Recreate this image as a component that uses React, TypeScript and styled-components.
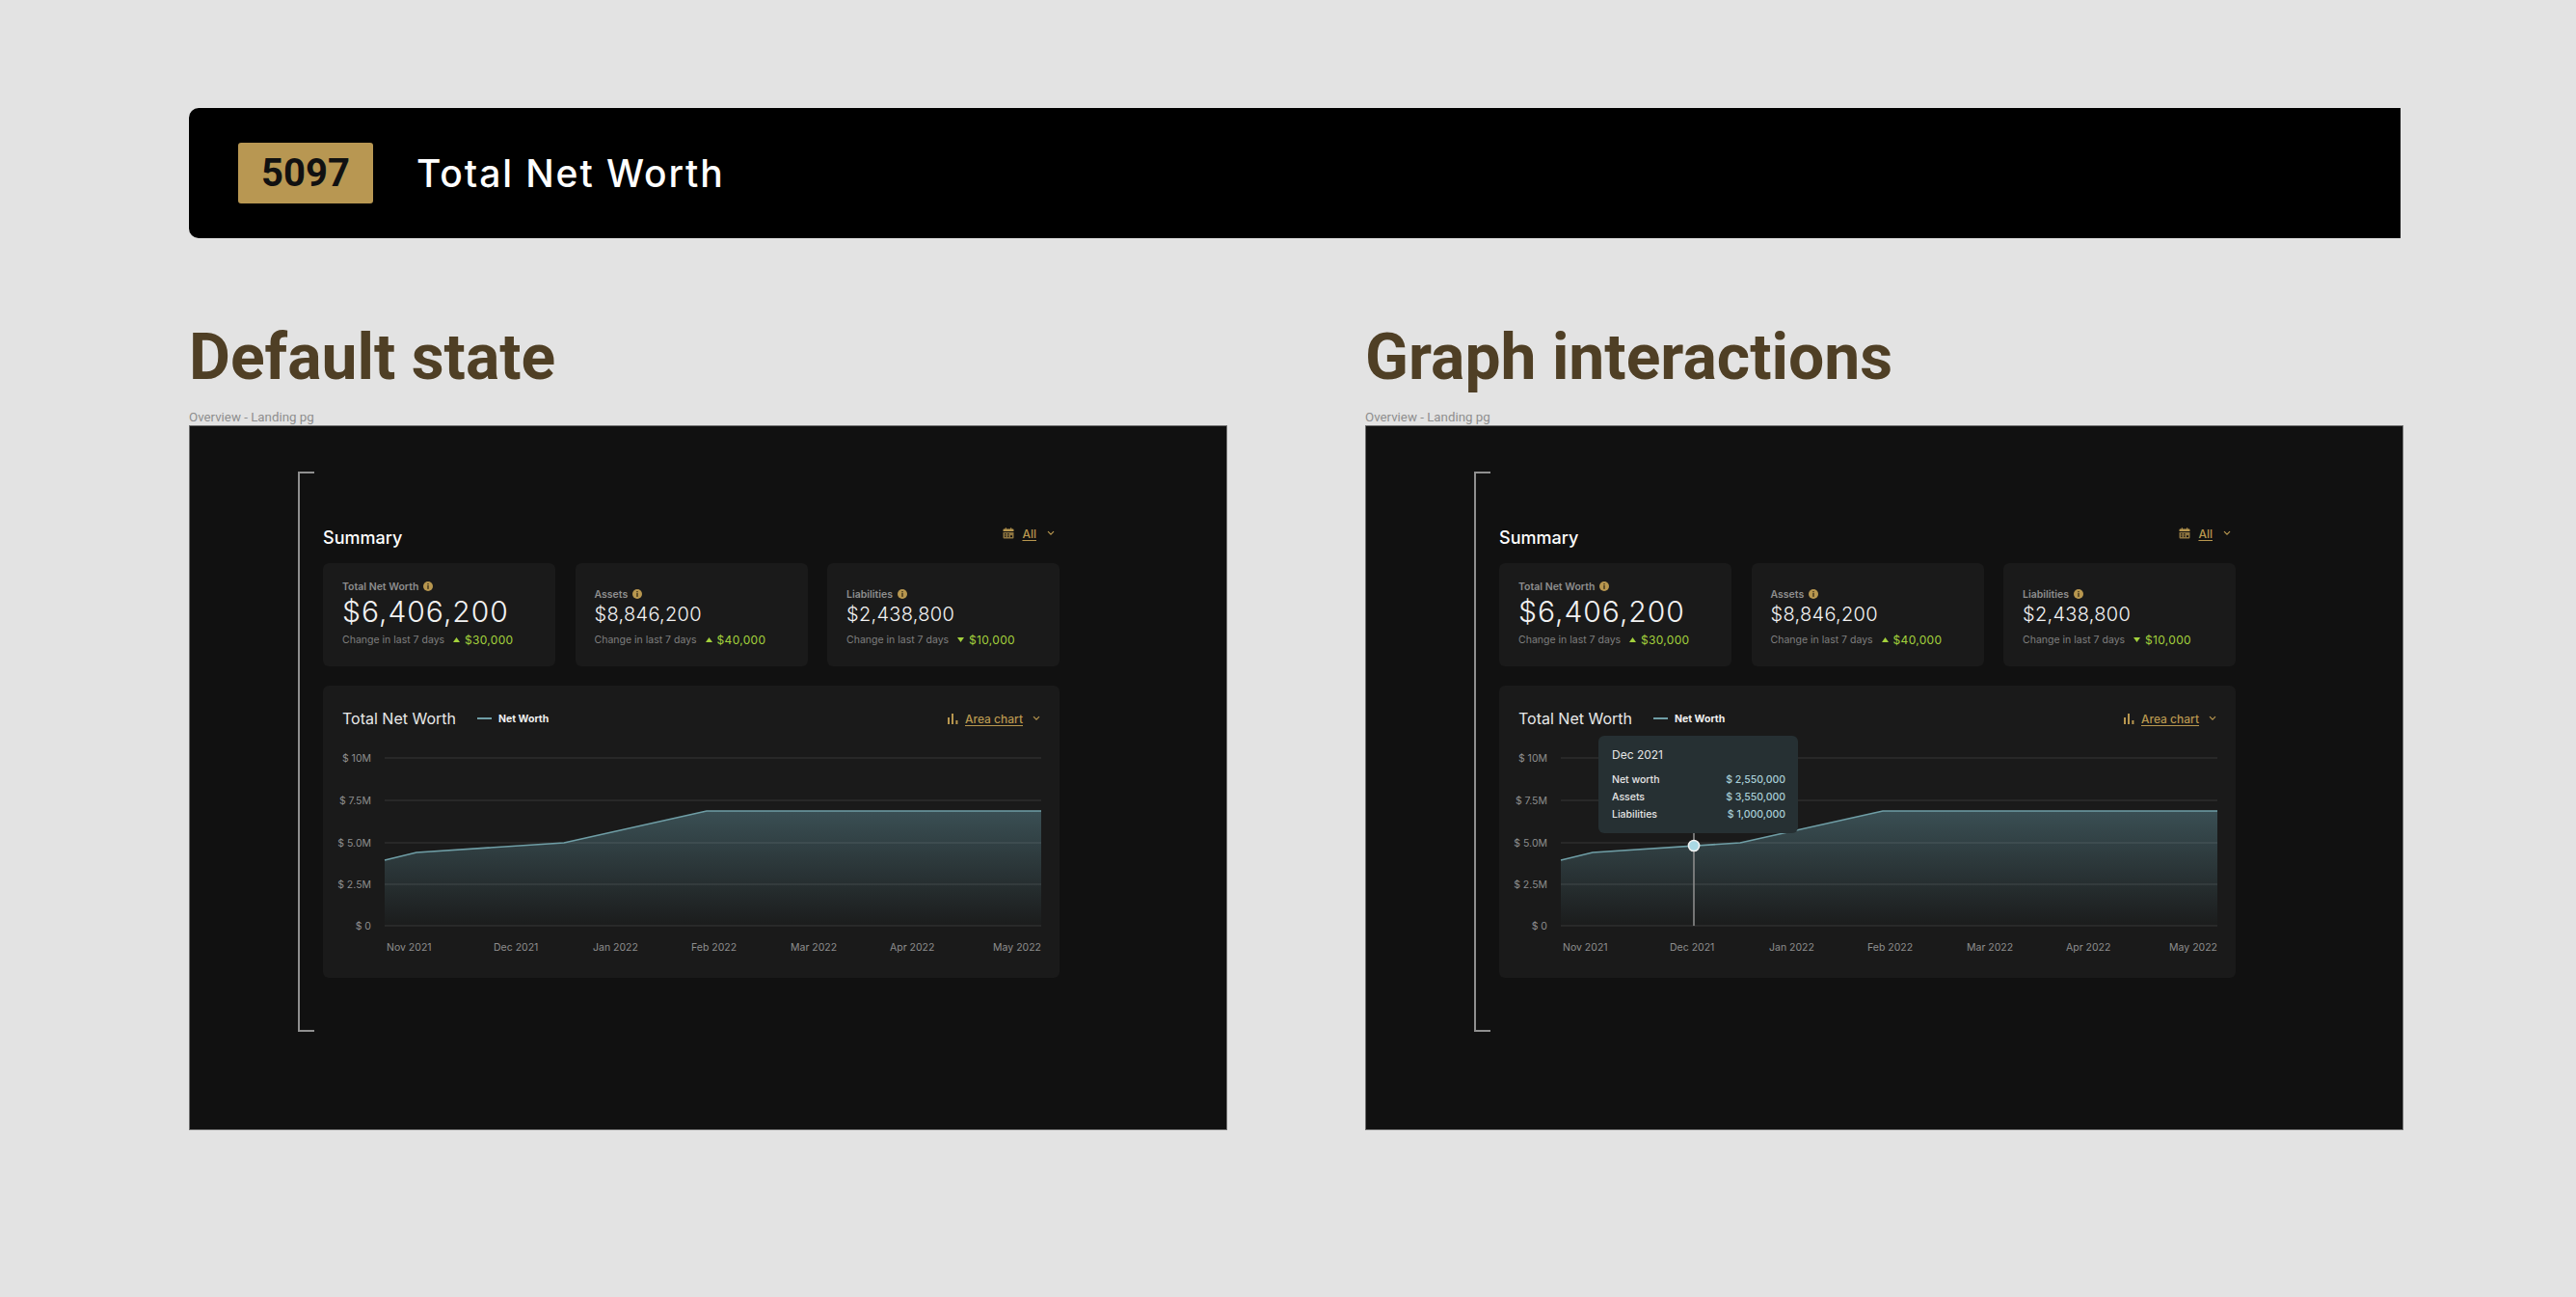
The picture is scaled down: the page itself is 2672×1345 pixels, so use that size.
import styled, { createGlobalStyle } from 'styled-components';

type Stat = {
  label: string;
  value: string;
  change: string;
  direction: 'up' | 'down';
  featured?: boolean;
};

const STATS: Stat[] = [
  { label: 'Total Net Worth', value: '$6,406,200', change: '$30,000', direction: 'up', featured: true },
  { label: 'Assets', value: '$8,846,200', change: '$40,000', direction: 'up' },
  { label: 'Liabilities', value: '$2,438,800', change: '$10,000', direction: 'down' },
];

const Y_AXIS = [
  { label: '$ 10M', y: 15 },
  { label: '$ 7.5M', y: 59 },
  { label: '$ 5.0M', y: 103 },
  { label: '$ 2.5M', y: 146 },
  { label: '$ 0', y: 189 },
];

const X_AXIS = [
  { label: 'Nov 2021', x: 46 },
  { label: 'Dec 2021', x: 157 },
  { label: 'Jan 2022', x: 260 },
  { label: 'Feb 2022', x: 362 },
  { label: 'Mar 2022', x: 465 },
  { label: 'Apr 2022', x: 568 },
];

const TOOLTIP_ROWS = [
  { label: 'Net worth', value: '$ 2,550,000' },
  { label: 'Assets', value: '$ 3,550,000' },
  { label: 'Liabilities', value: '$ 1,000,000' },
];

const LINE = '44,121 77,113 230,103 378,70 725,70';
const AREA = `44,189 ${LINE} 725,189`;

const Chevron = () => (
  <svg width="8" height="6" viewBox="0 0 8 6" fill="none">
    <path d="M1 1.2 4 4.2 7 1.2" stroke="#b8974f" strokeWidth="1.2" />
  </svg>
);

const CalendarIcon = () => (
  <svg width="12" height="12" viewBox="0 0 12 12">
    <path d="M0.5 2.5a1 1 0 0 1 1-1h9a1 1 0 0 1 1 1v1.5h-11z" fill="#b8974f" />
    <path d="M2.8 0.3h1v2h-1zM8.2 0.3h1v2h-1z" fill="#b8974f" />
    <path
      d="M0.5 5h11v5.5a1 1 0 0 1-1 1h-9a1 1 0 0 1-1-1zM2 6.2v1.2h1.6V6.2zM5 6.2v1.2h1.6V6.2zM2 8.6v1.2h1.6V8.6zM5 8.6v1.2h1.6V8.6zM8 8.2v1.8h2V8.2z"
      fill="#8f7640"
      fillRule="evenodd"
    />
  </svg>
);

const BarsIcon = () => (
  <svg width="11" height="11" viewBox="0 0 11 11" fill="#b8974f">
    <rect x="0" y="4" width="2" height="7" />
    <rect x="4" y="0" width="2" height="11" />
    <rect x="8.4" y="7" width="2" height="4" />
  </svg>
);

const InfoIcon = () => (
  <svg width="10" height="10" viewBox="0 0 10 10">
    <circle cx="5" cy="5" r="5" fill="#b8974f" />
    <rect x="4.4" y="2" width="1.2" height="1.2" fill="#2a2212" />
    <rect x="4.4" y="3.9" width="1.2" height="4" fill="#2a2212" />
  </svg>
);

const Trend = ({ direction }: { direction: 'up' | 'down' }) => (
  <svg width="7" height="5" viewBox="0 0 7 5" fill="#a3d13c">
    <path d={direction === 'up' ? 'M3.5 0 7 5H0z' : 'M0 0h7L3.5 5z'} />
  </svg>
);

function Chart({ interactive }: { interactive: boolean }) {
  const gradientId = interactive ? 'areaB' : 'areaA';

  return (
    <Plot width="725" height="225" viewBox="0 0 725 225">
      <defs>
        <linearGradient id={gradientId} x1="0" y1="0" x2="0" y2="1">
          <stop offset="0" stopColor="#3a4f54" />
          <stop offset="1" stopColor="#1b1c1c" />
        </linearGradient>
      </defs>
      <polygon points={AREA} fill={`url(#${gradientId})`} />
      {Y_AXIS.map(tick => (
        <g key={tick.label}>
          <line x1="44" x2="725" y1={tick.y} y2={tick.y} stroke="#ffffff" strokeOpacity="0.13" strokeWidth="1.2" />
          <AxisText x="30" y={tick.y + 4} textAnchor="end">
            {tick.label}
          </AxisText>
        </g>
      ))}
      <polyline points={LINE} fill="none" stroke="#6f9ea6" strokeWidth="1.6" />
      {X_AXIS.map(tick => (
        <AxisText key={tick.label} x={tick.x} y="215">
          {tick.label}
        </AxisText>
      ))}
      <AxisText x="725" y="215" textAnchor="end">
        May 2022
      </AxisText>
      {interactive && (
        <>
          <line x1="182" x2="182" y1="90" y2="189" stroke="#8b8b8b" strokeWidth="1.6" />
          <circle cx="182" cy="106" r="5.6" fill="#a9d8e4" stroke="#f4f4f4" strokeWidth="1.5" />
        </>
      )}
    </Plot>
  );
}

function Overview({ title, interactive = false }: { title: string; interactive?: boolean }) {
  return (
    <Section>
      <Heading>{title}</Heading>
      <Caption>Overview - Landing pg</Caption>
      <Panel>
        <Frame>
          <Bracket />
          <Content>
            <SummaryRow>
              <SummaryTitle>Summary</SummaryTitle>
              <Dropdown>
                <CalendarIcon />
                <DropdownLabel>All</DropdownLabel>
                <Chevron />
              </Dropdown>
            </SummaryRow>
            <Stats>
              {STATS.map(stat => (
                <StatCard key={stat.label} $featured={stat.featured}>
                  <StatLabel>
                    {stat.label}
                    <InfoIcon />
                  </StatLabel>
                  <StatValue $featured={stat.featured}>{stat.value}</StatValue>
                  <StatChange>
                    <span>Change in last 7 days</span>
                    <ChangeAmount>
                      <Trend direction={stat.direction} />
                      {stat.change}
                    </ChangeAmount>
                  </StatChange>
                </StatCard>
              ))}
            </Stats>
            <ChartCard>
              <ChartHeader>
                <ChartTitle>Total Net Worth</ChartTitle>
                <LegendLine />
                <LegendText>Net Worth</LegendText>
                <ChartType>
                  <BarsIcon />
                  <DropdownLabel>Area chart</DropdownLabel>
                  <Chevron />
                </ChartType>
              </ChartHeader>
              <Chart interactive={interactive} />
              {interactive && (
                <Tooltip>
                  <TooltipDate>Dec 2021</TooltipDate>
                  {TOOLTIP_ROWS.map(row => (
                    <TooltipRow key={row.label}>
                      <span>{row.label}</span>
                      <TooltipValue>{row.value}</TooltipValue>
                    </TooltipRow>
                  ))}
                </Tooltip>
              )}
            </ChartCard>
          </Content>
        </Frame>
      </Panel>
    </Section>
  );
}

export default function App() {
  return (
    <>
      <GlobalStyle />
      <Page>
        <Banner>
          <Badge>5097</Badge>
          <BannerTitle>Total Net Worth</BannerTitle>
        </Banner>
        <Sections>
          <Overview title="Default state" />
          <Overview title="Graph interactions" interactive />
        </Sections>
      </Page>
    </>
  );
}

const GlobalStyle = createGlobalStyle`
  html, body {
    margin: 0;
    height: 100%;
    overflow: hidden;
    background: #e3e3e3;
  }

  * {
    box-sizing: border-box;
  }
`;

const Page = styled.div`
  padding: 112px 0 0 196px;
  font-family: Inter, 'Liberation Sans', sans-serif;
`;

const Banner = styled.header`
  width: 2294px;
  height: 135px;
  display: flex;
  align-items: center;
  gap: 45px;
  padding-left: 51px;
  background: #000;
  border-radius: 10px 0 0 10px;
`;

const Badge = styled.div`
  width: 140px;
  height: 63px;
  display: flex;
  align-items: center;
  justify-content: center;
  background: #b89752;
  border-radius: 3px;
  color: #111;
  font-family: Roboto, sans-serif;
  font-size: 40px;
  font-weight: 700;
`;

const BannerTitle = styled.h1`
  margin: 0;
  color: #fff;
  font-size: 39px;
  font-weight: 500;
  letter-spacing: 1.9px;
`;

const Sections = styled.div`
  display: flex;
  gap: 143px;
  margin-top: 86px;
`;

const Section = styled.section`
  width: 1077px;
`;

const Heading = styled.h2`
  margin: 0 0 16px;
  color: #4f3f25;
  font-family: Roboto, sans-serif;
  font-size: 66px;
  font-weight: 700;
  line-height: 76px;
`;

const Caption = styled.div`
  height: 16px;
  color: #8e8e8e;
  font-family: Roboto, sans-serif;
  font-size: 13.3px;
  line-height: 15px;
`;

const Panel = styled.div`
  height: 731px;
  padding: 47px 0 0 112px;
  background: #111;
  border: 1px solid #6e6e6e;
`;

const Frame = styled.div`
  display: flex;
  height: 581px;
`;

const Bracket = styled.div`
  width: 17px;
  border: 2px solid #8f8f8f;
  border-right: none;
`;

const Content = styled.div`
  width: 764px;
  margin-left: 9px;
  padding-top: 52px;
`;

const SummaryRow = styled.div`
  height: 43px;
  display: flex;
  justify-content: space-between;
  padding-right: 5px;
`;

const SummaryTitle = styled.h3`
  margin: 0;
  color: #fff;
  font-size: 18px;
  font-weight: 500;
  line-height: 34px;
`;

const Dropdown = styled.div`
  display: flex;
  align-items: center;
  gap: 8px;
  height: 24px;
  color: #b8974f;
`;

const DropdownLabel = styled.span`
  margin-right: 3px;
  color: #b8974f;
  font-size: 12px;
  font-weight: 500;
  text-decoration: underline;
  text-underline-offset: 2px;
`;

const Stats = styled.div`
  display: grid;
  grid-template-columns: repeat(3, 241px);
  justify-content: space-between;
`;

const StatCard = styled.article<{ $featured?: boolean }>`
  height: 107px;
  padding: ${({ $featured }) => ($featured ? '17px' : '25px')} 20px 0;
  background: #1a1a1a;
  border-radius: 6px;
`;

const StatLabel = styled.div`
  display: flex;
  align-items: center;
  gap: 5px;
  height: 14px;
  color: #8e8e8e;
  font-size: 10.5px;
  font-weight: 600;
`;

const StatValue = styled.div<{ $featured?: boolean }>`
  height: ${({ $featured }) => ($featured ? '40px' : '30px')};
  margin-top: ${({ $featured }) => ($featured ? '-2px' : '0')};
  color: #f2f2f2;
  font-size: ${({ $featured }) => ($featured ? '30px' : '20px')};
  font-weight: 300;
  letter-spacing: ${({ $featured }) => ($featured ? '1px' : '0.3px')};
  line-height: ${({ $featured }) => ($featured ? '42px' : '28px')};
`;

const StatChange = styled.div`
  display: flex;
  align-items: center;
  gap: 9px;
  height: 16px;
  margin-top: 2px;
  color: #7f7f7f;
  font-size: 10.5px;
`;

const ChangeAmount = styled.span`
  display: flex;
  align-items: center;
  gap: 5px;
  color: #a3d13c;
  font-size: 12px;
  letter-spacing: 0.3px;
`;

const ChartCard = styled.article`
  position: relative;
  height: 303px;
  margin-top: 20px;
  padding: 24px 19px 0 20px;
  background: #1a1a1a;
  border-radius: 6px;
`;

const ChartHeader = styled.div`
  display: flex;
  align-items: center;
  height: 20px;
  margin-bottom: 16px;
`;

const ChartTitle = styled.h4`
  margin: 0 22px 0 0;
  color: #e8e8e8;
  font-size: 16px;
  font-weight: 400;
`;

const LegendLine = styled.span`
  width: 15px;
  height: 2px;
  margin-right: 7px;
  background: #6f9ea6;
`;

const LegendText = styled.span`
  color: #f0f0f0;
  font-size: 10.5px;
  font-weight: 700;
`;

const ChartType = styled.div`
  display: flex;
  align-items: center;
  gap: 7px;
  margin-left: auto;
  padding-right: 1px;
`;

const Plot = styled.svg`
  display: block;
  overflow: visible;
`;

const AxisText = styled.text`
  fill: #8e8e8e;
  font-family: Inter, sans-serif;
  font-size: 10.5px;
`;

const Tooltip = styled.div`
  position: absolute;
  left: 103px;
  top: 52px;
  width: 207px;
  height: 101px;
  padding: 13px 13px 0 14px;
  background: #263033;
  border-radius: 6px;
  color: #e6e6e6;
  font-size: 10.5px;
`;

const TooltipDate = styled.div`
  height: 24px;
  font-size: 12px;
  line-height: 14px;
`;

const TooltipRow = styled.div`
  display: flex;
  justify-content: space-between;
  height: 18px;
  line-height: 18px;
  font-weight: 500;
`;

const TooltipValue = styled.span`
  color: #a9cfd8;
`;
